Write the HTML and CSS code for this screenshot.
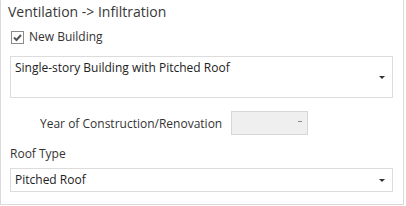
FILE: index.html
```html
<!DOCTYPE html>
<html lang="en">
<head>
    <meta charset="UTF-8">
    <title>Ventilation -> Infiltration</title>
    <link rel="stylesheet" href="styles.css">
</head>
<body>
    <div class="panel">
        <h1 class="panel-title">Ventilation -&gt; Infiltration</h1>

        <label class="check-row">
            <span class="check-box">
                <svg width="11" height="11" viewBox="0 0 11 11">
                    <path d="M2 5.5 L4.5 8 L9 3" fill="none" stroke="#555" stroke-width="2"/>
                </svg>
            </span>
            New Building
        </label>

        <div class="combo combo-tall">
            <span class="combo-text">Single-story Building with Pitched Roof</span>
            <span class="combo-arrow"></span>
        </div>

        <div class="year-row">
            <span class="year-label">Year of Construction/Renovation</span>
            <div class="year-box">
                <span class="year-dash"></span>
            </div>
        </div>

        <div class="field-label">Roof Type</div>
        <div class="combo combo-short">
            <span class="combo-text">Pitched Roof</span>
            <span class="combo-arrow"></span>
        </div>
    </div>
</body>
</html>
```

FILE: styles.css
```css
body {
    margin: 0;
    background: #fff;
    font-family: 'Open Sans', 'Noto Sans', sans-serif;
    color: #333;
}

.panel {
    width: 402px;
    height: 204px;
    border: 1px solid #d9d9d9;
    border-top: none;
    position: relative;
}

.panel-title {
    margin: 0;
    padding: 2px 0 0 7px;
    font-size: 14px;
    font-weight: normal;
    line-height: 20px;
    color: #383838;
}

.check-row {
    display: flex;
    align-items: center;
    gap: 5px;
    margin: 8px 0 0 10px;
    font-size: 12px;
    line-height: 14px;
    color: #333;
}

.check-box {
    width: 11px;
    height: 11px;
    border: 1px solid #8a8a8a;
    display: flex;
    align-items: center;
    justify-content: center;
    background: #fff;
}

.combo {
    margin-left: 9px;
    width: 381px;
    border: 1px solid #dcdcdc;
    background: #fff;
    position: relative;
    font-size: 12px;
    color: #222;
}

.combo-tall {
    margin-top: 12px;
    height: 40px;
}

.combo-short {
    margin-top: 6px;
    height: 22px;
}

.combo-text {
    display: block;
    padding: 3px 0 0 4px;
    line-height: 16px;
}

.combo-arrow {
    position: absolute;
    right: 7px;
    width: 0;
    height: 0;
    border-left: 3px solid transparent;
    border-right: 3px solid transparent;
    border-top: 3px solid #333;
}

.combo-tall .combo-arrow {
    top: 19px;
}

.combo-short .combo-arrow {
    top: 10px;
}

.year-row {
    display: flex;
    align-items: center;
    margin: 13px 0 0 39px;
    font-size: 12px;
    color: #333;
}

.year-label {
    width: 191px;
}

.year-box {
    width: 75px;
    height: 22px;
    border: 1px solid #d6d6d6;
    background: #efefef;
    position: relative;
}

.year-dash {
    position: absolute;
    right: 5px;
    top: 9px;
    width: 4px;
    height: 1px;
    background: #888;
}

.field-label {
    margin: 11px 0 0 9px;
    font-size: 12px;
    line-height: 16px;
    color: #333;
}
```
